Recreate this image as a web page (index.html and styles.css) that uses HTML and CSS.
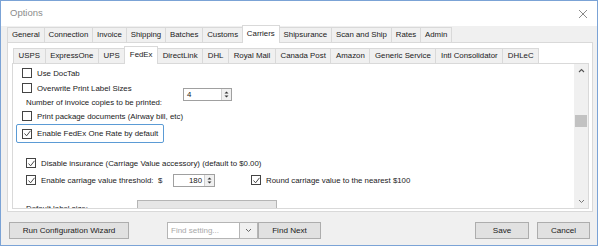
FILE: index.html
```html
<!DOCTYPE html>
<html lang="en">
<head>
    <meta charset="UTF-8">
    <title>Options</title>
    <link rel="stylesheet" href="styles.css">
</head>
<body>
    <div class="window">
        <div class="titlebar">
            <span class="title">Options</span>
            <svg class="close" width="10" height="10" viewBox="0 0 10 10"><path d="M1 1L9 9M9 1L1 9" stroke="#8a8a8a" stroke-width="1" fill="none"/></svg>
        </div>

        <div class="tabs top-tabs">
            <span class="tab">General</span>
            <span class="tab">Connection</span>
            <span class="tab">Invoice</span>
            <span class="tab">Shipping</span>
            <span class="tab">Batches</span>
            <span class="tab">Customs</span>
            <span class="tab active">Carriers</span>
            <span class="tab">Shipsurance</span>
            <span class="tab">Scan and Ship</span>
            <span class="tab">Rates</span>
            <span class="tab">Admin</span>
        </div>

        <div class="page outer-page">
            <div class="tabs sub-tabs">
                <span class="tab">USPS</span>
                <span class="tab">ExpressOne</span>
                <span class="tab">UPS</span>
                <span class="tab active">FedEx</span>
                <span class="tab">DirectLink</span>
                <span class="tab">DHL</span>
                <span class="tab">Royal Mail</span>
                <span class="tab">Canada Post</span>
                <span class="tab">Amazon</span>
                <span class="tab">Generic Service</span>
                <span class="tab">Intl Consolidator</span>
                <span class="tab">DHLeC</span>
            </div>

            <div class="page inner-page">
                <div class="content">
                    <label class="row">
                        <span class="check"></span>Use DocTab
                    </label>
                    <div class="copies">
                        <div class="copies-labels">
                            <label class="row">
                                <span class="check"></span>Overwrite Print Label Sizes
                            </label>
                            <div class="row indent">Number of invoice copies to be printed:</div>
                        </div>
                        <div class="spin spin-copies">
                            <span class="spin-value">4</span>
                            <span class="spin-buttons">
                                <svg width="5" height="9" viewBox="0 0 5 9"><path d="M0.5 3.5L2.5 1.5L4.5 3.5ZM0.5 5.5L2.5 7.5L4.5 5.5Z" fill="#333"/></svg>
                            </span>
                        </div>
                    </div>
                    <label class="row">
                        <span class="check"></span>Print package documents (Airway bill, etc)
                    </label>
                    <label class="row focused">
                        <span class="check checked"><svg width="7" height="7" viewBox="0 0 7 7"><path d="M0.5 3.5L2.6 5.8L6.5 0.8" stroke="#333" stroke-width="0.9" fill="none"/></svg></span>Enable FedEx One Rate by default
                    </label>

                    <label class="row indent section">
                        <span class="check checked"><svg width="7" height="7" viewBox="0 0 7 7"><path d="M0.5 3.5L2.6 5.8L6.5 0.8" stroke="#333" stroke-width="0.9" fill="none"/></svg></span>Disable insurance (Carriage Value accessory) (default to $0.00)
                    </label>
                    <div class="row indent threshold">
                        <label class="threshold-label">
                            <span class="check checked"><svg width="7" height="7" viewBox="0 0 7 7"><path d="M0.5 3.5L2.6 5.8L6.5 0.8" stroke="#333" stroke-width="0.9" fill="none"/></svg></span>Enable carriage value threshold:
                        </label>
                        <span class="currency">$</span>
                        <div class="spin spin-threshold">
                            <span class="spin-value">180</span>
                            <span class="spin-buttons">
                                <svg width="5" height="9" viewBox="0 0 5 9"><path d="M0.5 3.5L2.5 1.5L4.5 3.5ZM0.5 5.5L2.5 7.5L4.5 5.5Z" fill="#333"/></svg>
                            </span>
                        </div>
                        <label class="round-label">
                            <span class="check checked"><svg width="7" height="7" viewBox="0 0 7 7"><path d="M0.5 3.5L2.6 5.8L6.5 0.8" stroke="#333" stroke-width="0.9" fill="none"/></svg></span>Round carriage value to the nearest $100
                        </label>
                    </div>
                    <div class="row indent cut-row">
                        <span class="cut-label">Default label size:</span>
                        <span class="combo"></span>
                    </div>
                </div>
                <div class="scrollbar">
                    <svg width="7" height="5" viewBox="0 0 7 5"><path d="M1 4L3.5 1.5L6 4" stroke="#555" stroke-width="1.1" fill="none"/></svg>
                    <div class="track"><div class="thumb"></div></div>
                    <svg width="7" height="5" viewBox="0 0 7 5"><path d="M1 1L3.5 3.5L6 1" stroke="#777" stroke-width="1" fill="none"/></svg>
                </div>
            </div>
        </div>

        <div class="footer">
            <button class="btn wizard">Run Configuration Wizard</button>
            <div class="find">
                <span class="find-input">Find setting...</span>
                <span class="find-drop">
                    <svg width="7" height="5" viewBox="0 0 7 5"><path d="M1 1L3.5 3.5L6 1" stroke="#666" stroke-width="1" fill="none"/></svg>
                </span>
            </div>
            <button class="btn find-next">Find Next</button>
            <button class="btn save">Save</button>
            <button class="btn cancel">Cancel</button>
        </div>
    </div>
</body>
</html>
```

FILE: styles.css
```css
body {
    margin: 0;
    background: #ffffff;
    font-family: "Liberation Sans", Arial, sans-serif;
    font-size: 7.85px;
    color: #1a1a1a;
}
.window {
    width: 596px;
    height: 244px;
    border: 1px solid #7ba3d6;
    background: #f0f0f0;
    display: flex;
    flex-direction: column;
}
.titlebar {
    height: 25px;
    background: #ffffff;
    display: flex;
    align-items: center;
    justify-content: space-between;
    padding: 0 9px 2px 9px;
    box-sizing: border-box;
}
.title {
    font-size: 9.5px;
    color: #8c8c8c;
}
.close {
    margin-top: 2px;
}
.tabs {
    display: flex;
    align-items: flex-end;
}
.tab {
    height: 14px;
    line-height: 14px;
    border: 1px solid #d9d9d9;
    border-bottom: none;
    margin-right: -1px;
    background: #f0f0f0;
    white-space: nowrap;
}
.tab.active {
    height: 17px;
    line-height: 15px;
    background: #ffffff;
    position: relative;
    z-index: 1;
    margin-bottom: -1px;
}
.top-tabs {
    height: 16px;
    padding-left: 6px;
}
.top-tabs .tab {
    padding: 0 3.9px;
}
.page {
    border: 1px solid #d9d9d9;
    background: #ffffff;
}
.outer-page {
    margin: 0 4px 0 6px;
    height: 170px;
    padding: 6px 3px 2px 4px;
    box-sizing: border-box;
    display: flex;
    flex-direction: column;
}
.sub-tabs {
    height: 14px;
    padding-left: 1px;
}
.sub-tabs .tab {
    padding: 0 4.6px;
}
.inner-page {
    flex: 1;
    display: flex;
    overflow: hidden;
}
.content {
    flex: 1;
    display: flex;
    flex-direction: column;
    padding-top: 2px;
    overflow: hidden;
}
.row {
    height: 14px;
    flex-shrink: 0;
    display: flex;
    align-items: center;
    padding-left: 9px;
    white-space: nowrap;
}
.row.indent {
    padding-left: 13px;
}
.check {
    width: 8px;
    height: 8px;
    border: 1px solid #444;
    background: #ffffff;
    margin-right: 5px;
    display: flex;
    align-items: center;
    justify-content: center;
    flex-shrink: 0;
}
.copies {
    display: flex;
    align-items: center;
    margin-top: 1px;
}
.copies-labels {
    width: 170px;
    display: flex;
    flex-direction: column;
}
.spin {
    height: 11px;
    border: 1px solid #a0a0a0;
    background: #ffffff;
    display: flex;
    align-items: center;
}
.spin-value {
    flex: 1;
    padding: 0 3px;
}
.spin-buttons {
    width: 9px;
    height: 11px;
    border-left: 1px solid #d0d0d0;
    background: #f0f0f0;
    display: flex;
    align-items: center;
    justify-content: center;
}
.spin-copies {
    width: 47px;
    margin-top: -2px;
}
.spin-threshold {
    width: 40px;
}
.spin-threshold .spin-value {
    text-align: right;
    padding-right: 2px;
}
.focused {
    align-self: flex-start;
    height: 17px;
    margin: 1px 0 0 3px;
    padding: 0 5px;
    border: 1px solid #5b9bd5;
    border-radius: 2px;
}
.section {
    margin-top: 13px;
}
.threshold {
    margin-top: 3px;
}
.threshold-label {
    display: flex;
    align-items: center;
    width: 132px;
}
.currency {
    width: 15px;
}
.round-label {
    display: flex;
    align-items: center;
    margin-left: 36px;
}
.cut-row {
    margin-top: 10px;
    align-items: flex-start;
}
.cut-label {
    width: 111px;
    padding-top: 7px;
}
.combo {
    width: 138px;
    height: 12px;
    margin-top: 3px;
    border: 1px solid #b5b5b5;
    background: #e6e6e6;
}
.scrollbar {
    width: 14px;
    background: #f0f0f0;
    display: flex;
    flex-direction: column;
    align-items: center;
    padding: 4px 0;
    box-sizing: border-box;
}
.track {
    flex: 1;
    width: 100%;
    position: relative;
}
.thumb {
    position: absolute;
    left: 1px;
    right: 1px;
    top: 42px;
    height: 12px;
    background: #c2c2c2;
}
.footer {
    flex: 1;
    display: flex;
    align-items: center;
    padding: 3px 7px 0 8px;
}
.btn {
    font-family: inherit;
    font-size: 8.1px;
    color: #1a1a1a;
    height: 17px;
    padding: 0;
    border: 1px solid #adadad;
    background: #e1e1e1;
}
.wizard {
    width: 120px;
}
.find {
    display: flex;
    margin-left: 38px;
}
.find-input {
    width: 68px;
    height: 15px;
    line-height: 15px;
    padding-left: 3px;
    border: 1px solid #b5b5b5;
    background: #ffffff;
    color: #a8a8a8;
    font-size: 8px;
}
.find-drop {
    width: 17px;
    height: 15px;
    border: 1px solid #b5b5b5;
    border-left: none;
    background: #f0f0f0;
    display: flex;
    align-items: center;
    justify-content: center;
}
.find-next {
    width: 63px;
}
.save {
    width: 54px;
    margin-left: auto;
}
.cancel {
    width: 53px;
    margin-left: 8px;
}
```
